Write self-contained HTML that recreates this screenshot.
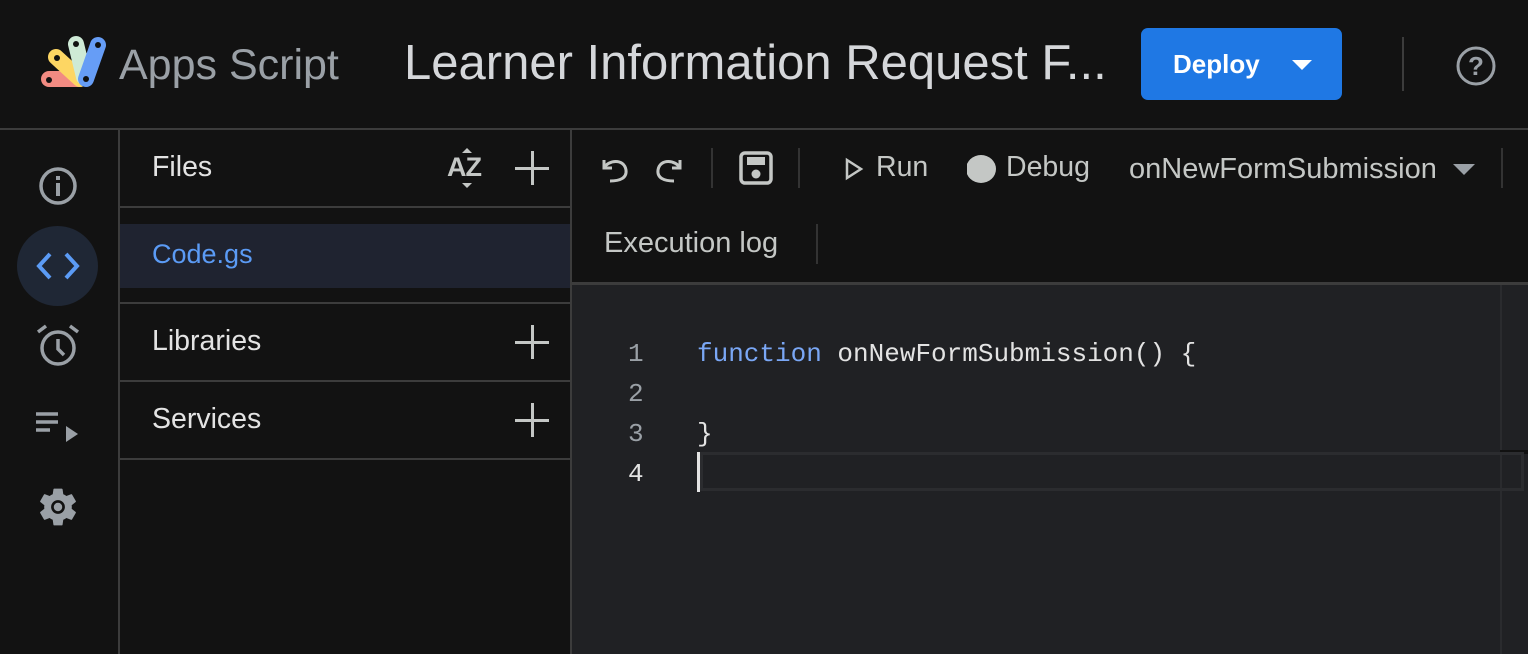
<!DOCTYPE html>
<html><head><style>
*{margin:0;padding:0;box-sizing:border-box}
body{width:1528px;height:654px;background:#121212;font-family:"Liberation Sans",sans-serif;color:#e3e3e3;position:relative;overflow:hidden}
.a{position:absolute}
.hl{position:absolute;height:2px;background:#3c3c3c}
.vl{position:absolute;width:2px;background:#3c3c3c}
.t{position:absolute;white-space:nowrap}
.plus{position:absolute;width:34px;height:34px}
.plus:before{content:"";position:absolute;left:16px;top:0;width:3px;height:34px;background:#c4c7c5}
.plus:after{content:"";position:absolute;top:16px;left:0;height:3px;width:34px;background:#c4c7c5}
.mono{font-family:"Liberation Mono",monospace;font-size:26px}
.p{font-size:28.5px}
</style></head><body>
<!-- header -->
<svg class="a" style="left:40px;top:35px" width="70" height="55" viewBox="0 0 70 55">
<g stroke-linecap="round" stroke-width="16">
<line x1="9" y1="44" x2="40" y2="44" stroke="#f28b82"/>
<line x1="16" y1="22" x2="40" y2="44" stroke="#fdd663"/>
<line x1="36" y1="9" x2="44" y2="42" stroke="#ceead6"/>
<line x1="58" y1="10" x2="46" y2="44" stroke="#669df6"/>
</g>
<g fill="#111"><circle cx="9" cy="45" r="3"/><circle cx="17" cy="23" r="3"/><circle cx="36" cy="9" r="3"/><circle cx="58" cy="10" r="3"/><circle cx="46" cy="44" r="3"/></g>
</svg>
<div class="t" style="left:119px;top:41px;font-size:43px;color:#9aa0a6">Apps Script</div>
<div class="t" style="left:404px;top:35px;font-size:49px;color:#d5d7da">Learner Information Request F...</div>
<div class="a" style="left:1141px;top:28px;width:201px;height:72px;background:#1f78e4;border-radius:7px"></div>
<div class="t" style="left:1173px;top:49px;font-size:26px;color:#fff;font-weight:bold">Deploy</div>
<div class="a" style="left:1292px;top:60px;border-left:10px solid transparent;border-right:10px solid transparent;border-top:10px solid #fff"></div>
<div class="vl" style="left:1402px;top:37px;height:54px"></div>
<svg class="a" style="left:1455px;top:45px" width="42" height="42" viewBox="0 0 42 42"><circle cx="21" cy="21" r="18" fill="none" stroke="#9aa0a6" stroke-width="3"/><text x="21" y="30" text-anchor="middle" font-size="26" font-weight="bold" fill="#9aa0a6" font-family="Liberation Sans">?</text></svg>
<div class="hl" style="left:0;top:128px;width:1528px"></div>
<!-- rail -->
<div class="vl" style="left:118px;top:130px;height:524px"></div>
<svg class="a" style="left:36px;top:164px" width="44" height="44" viewBox="0 0 44 44"><circle cx="22" cy="22" r="17" fill="none" stroke="#9aa0a6" stroke-width="3.5"/><rect x="20" y="19" width="4" height="13" fill="#9aa0a6"/><rect x="20" y="12" width="4" height="4" fill="#9aa0a6"/></svg>
<div class="a" style="left:17px;top:226px;width:81px;height:80px;border-radius:50%;background:#1f2735"></div>
<svg class="a" style="left:34px;top:248px" width="48" height="36" viewBox="0 0 48 36"><path d="M16 6 L5 18 L16 30 M32 6 L43 18 L32 30" fill="none" stroke="#5b9bf5" stroke-width="4"/></svg>
<svg class="a" style="left:34px;top:322px" width="48" height="48" viewBox="0 0 48 48"><circle cx="24" cy="26" r="16" fill="none" stroke="#9aa0a6" stroke-width="3.5"/><path d="M24 17v10l6 6M4 10l8-6M44 10l-8-6" fill="none" stroke="#9aa0a6" stroke-width="3.5"/></svg>
<svg class="a" style="left:36px;top:410px" width="44" height="36" viewBox="0 0 44 36"><path d="M0 4h22M0 12h22M0 20h14" stroke="#9aa0a6" stroke-width="3.5"/><path d="M30 16l12 8-12 8z" fill="#9aa0a6"/></svg>
<svg class="a" style="left:35px;top:484px" width="46" height="46" viewBox="0 0 24 24"><path fill="#9aa0a6" d="M19.14 12.94c.04-.3.06-.61.06-.94 0-.32-.02-.64-.07-.94l2.030-1.58a.49.49 0 00.12-.61l-1.92-3.32a.49.49 0 00-.59-.22l-2.39.96c-.5-.38-1.03-.7-1.62-.94l-.36-2.54a.48.48 0 00-.48-.41h-3.84c-.24 0-.43.17-.47.41l-.36 2.54c-.59.24-1.130.57-1.62.94l-2.39-.96a.49.49 0 00-.59.22L2.74 8.87c-.12.21-.08.47.12.61l2.03 1.58c-.05.3-.09.63-.09.94s.02.64.07.94l-2.03 1.58a.49.49 0 00-.12.61l1.92 3.32c.12.22.37.29.59.22l2.39-.96c.5.38 1.03.7 1.62.94l.36 2.54c.05.24.24.41.48.41h3.84c.24 0 .44-.17.47-.41l.36-2.54c.59-.24 1.13-.56 1.62-.94l2.39.96c.22.08.47 0 .59-.22l1.92-3.32c.12-.22.07-.47-.12-.61l-2.01-1.58zM12 15.6A3.6 3.6 0 1112 8.4a3.6 3.6 0 010 7.2z"/><circle cx="12" cy="12" r="2.2" fill="#9aa0a6"/></svg>
<!-- files panel -->
<div class="vl" style="left:570px;top:130px;height:524px"></div>
<div class="t p" style="left:152px;top:151px">Files</div>
<div class="t" style="left:447px;top:152px;font-size:27px;font-weight:bold;color:#c4c7c5;letter-spacing:-1px">AZ</div>
<div class="a" style="left:462px;top:148px;border-left:5px solid transparent;border-right:5px solid transparent;border-bottom:5px solid #c4c7c5"></div>
<div class="a" style="left:462px;top:183px;border-left:5px solid transparent;border-right:5px solid transparent;border-top:5px solid #c4c7c5"></div>
<div class="plus" style="left:515px;top:151px"></div>
<div class="hl" style="left:120px;top:206px;width:450px"></div>
<div class="a" style="left:120px;top:224px;width:450px;height:64px;background:#1f2330"></div>
<div class="t" style="left:152px;top:239px;font-size:27px;color:#5b9bf5">Code.gs</div>
<div class="hl" style="left:120px;top:302px;width:450px"></div>
<div class="t p" style="left:152px;top:325px">Libraries</div>
<div class="plus" style="left:515px;top:325px"></div>
<div class="hl" style="left:120px;top:380px;width:450px"></div>
<div class="t p" style="left:152px;top:403px">Services</div>
<div class="plus" style="left:515px;top:403px"></div>
<div class="hl" style="left:120px;top:458px;width:450px"></div>
<!-- toolbar -->
<svg class="a" style="left:598px;top:152px" width="96" height="34" viewBox="0 0 96 34"><path d="M6 8v8h8M6 16 C10 8 26 6 28 18 C29 26 22 29 12 29" fill="none" stroke="#c4c7c5" stroke-width="3"/><path d="M82 8v8h-8M82 16 C78 8 62 6 60 18 C59 26 66 29 76 29" fill="none" stroke="#c4c7c5" stroke-width="3"/></svg>
<div class="vl" style="left:711px;top:148px;height:40px;background:#333"></div>
<svg class="a" style="left:739px;top:151px" width="34" height="34" viewBox="0 0 34 34"><rect x="2" y="2" width="30" height="30" rx="4" fill="none" stroke="#c4c7c5" stroke-width="3.5"/><rect x="8" y="6" width="18" height="8" fill="#c4c7c5"/><circle cx="17" cy="23" r="4.5" fill="#c4c7c5"/></svg>
<div class="vl" style="left:798px;top:148px;height:40px;background:#333"></div>
<svg class="a" style="left:844px;top:157px" width="20" height="24" viewBox="0 0 20 24"><path d="M3 3l14 9-14 9z" fill="none" stroke="#c4c7c5" stroke-width="2.5"/></svg>
<div class="t" style="left:876px;top:151px;font-size:28.5px;color:#c4c7c5">Run</div>
<div class="a" style="left:966px;top:155px;width:30px;height:28px;border-radius:50%;background:#c4c7c5"></div>
<div class="a" style="left:962px;top:155px;width:5px;height:28px;background:#121212"></div>
<div class="t" style="left:1006px;top:151px;font-size:28.5px;color:#c4c7c5">Debug</div>
<div class="t" style="left:1129px;top:153px;font-size:29px;color:#c4c7c5">onNewFormSubmission</div>
<div class="a" style="left:1453px;top:164px;border-left:11px solid transparent;border-right:11px solid transparent;border-top:11px solid #9aa0a6"></div>
<div class="vl" style="left:1501px;top:148px;height:40px;background:#333"></div>
<div class="t" style="left:604px;top:227px;font-size:29px;color:#c4c7c5">Execution log</div>
<div class="vl" style="left:816px;top:224px;height:40px;background:#333"></div>
<div class="hl" style="left:572px;top:282px;width:956px;height:3px"></div>
<!-- editor -->
<div class="a" style="left:572px;top:285px;width:956px;height:369px;background:#202124"></div>
<div class="a" style="left:1500px;top:285px;width:2px;height:369px;background:#2a2b2e"></div>
<div class="a" style="left:1500px;top:450px;width:28px;height:4px;background:#111"></div>
<div class="a" style="left:700px;top:452px;width:824px;height:39px;border:3px solid #2b2c2f"></div>
<div class="a" style="left:697px;top:452px;width:3px;height:40px;background:#e3e3e3"></div>
<div class="t mono" style="left:628px;top:334px;color:#9aa0a6;line-height:40px">1<br>2<br>3<br><span style="color:#e3e3e3">4</span></div>
<div class="t mono" style="left:697px;top:334px;line-height:40px;color:#e3e3e3"><span style="color:#7aa7f5">function</span> onNewFormSubmission() {<br>&nbsp;<br>}</div>
</body></html>
